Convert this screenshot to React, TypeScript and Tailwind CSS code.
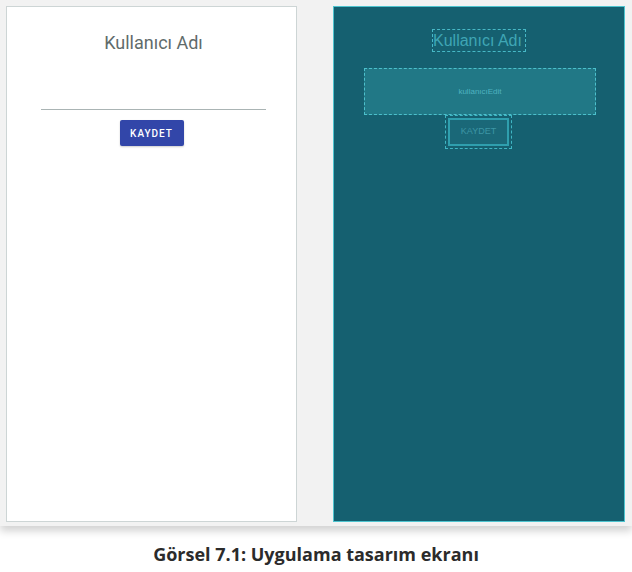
import React from "react";

export default function App() {
  return (
    <div className="w-[632px] h-[572px] bg-white overflow-hidden relative">
      <div className="w-[632px] h-[526px] bg-[#f2f2f2] shadow-[0_5px_8px_rgba(0,0,0,0.18)] flex pt-[6px] pl-[6px]">
        {/* Left: device preview */}
        <div className="w-[291px] h-[516px] bg-white border border-[#cdd5d5] flex flex-col items-center">
          <div
            className="mt-[25px] ml-[4px] text-[18px] leading-[22px] text-[#5f6b6b]"
            style={{ fontFamily: "Roboto, 'Liberation Sans', sans-serif" }}
          >
            Kullanıcı Adı
          </div>
          <div className="mt-[55px] w-[225px] h-[1px] bg-[#aab4b4] ml-[4px]" />
          <button
            className="mt-[10px] w-[64px] h-[26px] rounded-[2px] bg-[#3246a9] text-white text-[10px] font-medium tracking-[0.1em] flex items-center justify-center shadow-[0_1px_2px_rgba(0,0,0,0.2)]"
            style={{ fontFamily: "Roboto, 'Liberation Sans', sans-serif" }}
          >
            KAYDET
          </button>
        </div>

        {/* Right: blueprint */}
        <div className="ml-[36px] w-[292px] h-[516px] bg-[#156070] border border-[#4ec4cf] flex flex-col items-center">
          <div
            className="mt-[22px] w-[94px] h-[23px] border border-dashed border-[#47b8c6] text-[16px] leading-[21px] text-[#3fa6b5] whitespace-nowrap overflow-hidden"
            style={{ fontFamily: "'Liberation Sans', Arial, sans-serif" }}
          >
            Kullanıcı Adı
          </div>
          <div
            className="mt-[16px] w-[232px] h-[47px] bg-[#217886] border border-dashed border-[#4cc0cc] flex items-center justify-center text-[8px] text-[#4fb2c0] ml-[2px]"
            style={{ fontFamily: "'Liberation Sans', Arial, sans-serif" }}
          >
            kullanıcıEdit
          </div>
          <div className="w-[67px] h-[34px] border border-dashed border-[#3fb6c4] p-[2px] -ml-[1px]">
            <div
              className="w-full h-full border-2 border-[#2f9fae] bg-[#1a6878] flex items-center justify-center text-[9px] text-[#3d96a5]"
              style={{ fontFamily: "'Liberation Sans', Arial, sans-serif" }}
            >
              KAYDET
            </div>
          </div>
        </div>
      </div>

      <div
        className="mt-[17px] text-center text-[18px] font-bold text-[#2b2b2b] leading-[22px]"
        style={{ fontFamily: "'Open Sans', 'Liberation Sans', sans-serif" }}
      >
        Görsel 7.1: Uygulama tasarım ekranı
      </div>
    </div>
  );
}
